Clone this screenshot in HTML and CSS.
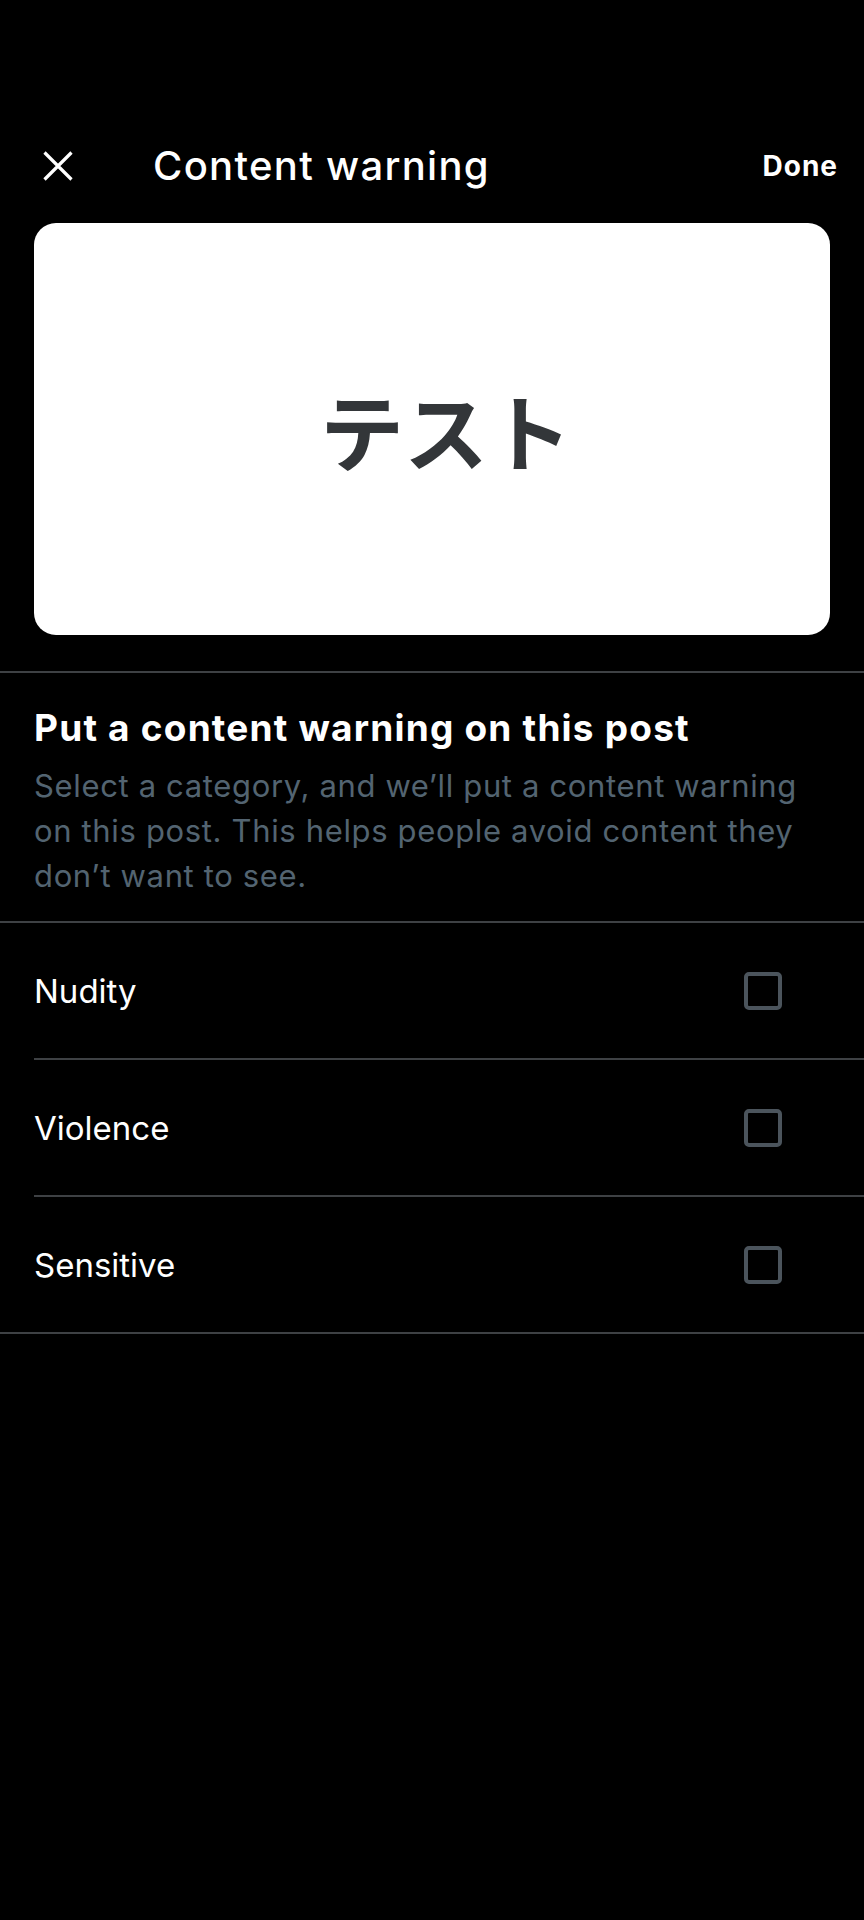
FILE: index.html
```html
<!DOCTYPE html>
<html lang="en">
<head>
<meta charset="utf-8">
<title>Content warning</title>
<link rel="stylesheet" href="styles.css">
</head>
<body>
<div class="screen">
  <header class="topbar">
    <button class="icon-btn" aria-label="Close">
      <svg width="30" height="30" viewBox="0 0 30 30" aria-hidden="true">
        <path d="M1.5 1.5 L28.5 28.5 M28.5 1.5 L1.5 28.5" stroke="#fff" stroke-width="3.2" stroke-linecap="butt" fill="none"/>
      </svg>
    </button>
    <h1 class="title">Content warning</h1>
    <button class="done">Done</button>
  </header>

  <div class="preview">
    <span class="preview-text">テスト</span>
  </div>

  <section class="intro">
    <h2 class="intro-heading">Put a content warning on this post</h2>
    <p class="intro-text">Select a category, and we’ll put a content warning on this post. This helps people avoid content they don’t want to see.</p>
  </section>

  <ul class="options">
    <li class="option"><label class="option-row"><span class="option-label">Nudity</span><span class="checkbox"></span></label></li>
    <li class="option"><label class="option-row"><span class="option-label">Violence</span><span class="checkbox"></span></label></li>
    <li class="option"><label class="option-row"><span class="option-label">Sensitive</span><span class="checkbox"></span></label></li>
  </ul>
</div>
</body>
</html>
```

FILE: styles.css
```css
* {
  box-sizing: border-box;
}

html, body {
  margin: 0;
  padding: 0;
  background: #000;
}

body {
  font-family: Inter, "Noto Sans CJK JP", sans-serif;
  color: #e7e9ea;
  min-height: 1920px;
}

.screen {
  width: 864px;
}

/* top bar */
.topbar {
  display: flex;
  align-items: center;
  height: 90px;
  margin-top: 121px;
  padding: 0 26px 0 43px;
}

.icon-btn {
  display: flex;
  background: none;
  border: 0;
  padding: 0;
  width: 30px;
  height: 30px;
}

.title {
  margin: 0 0 0 80px;
  flex: 1;
  font-size: 40px;
  font-weight: 500;
  letter-spacing: 1.3px;
  line-height: 1;
  color: #fff;
}

.done {
  background: none;
  border: 0;
  padding: 0;
  font-family: inherit;
  font-size: 28px;
  font-weight: 700;
  letter-spacing: 1px;
  color: #fff;
}

/* media preview card */
.preview {
  margin: 12px 34px 0;
  height: 412px;
  background: #fff;
  border-radius: 22px;
  display: flex;
  align-items: center;
  justify-content: center;
}

.preview-text {
  font-family: "Noto Sans CJK JP", sans-serif;
  font-weight: 700;
  font-size: 84px;
  line-height: 1;
  color: #333639;
  padding: 0 0 0 28px;
}

/* explanation */
.intro {
  margin-top: 36px;
  border-top: 2px solid #3e4144;
  padding: 33px 34px 23px;
}

.intro-heading {
  margin: 0;
  font-size: 37px;
  font-weight: 700;
  letter-spacing: 1.2px;
  line-height: 44px;
  color: #fff;
}

.intro-text {
  margin: 13px 0 0;
  font-size: 31px;
  letter-spacing: 0.65px;
  line-height: 45px;
  color: #536471;
}

/* category list */
.options {
  list-style: none;
  margin: 0;
  padding: 0;
  border-top: 2px solid #3e4144;
  border-bottom: 2px solid #3e4144;
}

.option {
  padding-left: 34px;
}

.option-row {
  display: flex;
  align-items: center;
  justify-content: space-between;
  height: 137px;
  padding-right: 82px;
  border-bottom: 2px solid #3e4144;
}

.option:last-child .option-row {
  height: 135px;
  border-bottom: 0;
}

.option-label {
  font-size: 33px;
  color: #fff;
}

.checkbox {
  width: 38px;
  height: 38px;
  border: 4px solid #4b545c;
  border-radius: 5px;
}
```
